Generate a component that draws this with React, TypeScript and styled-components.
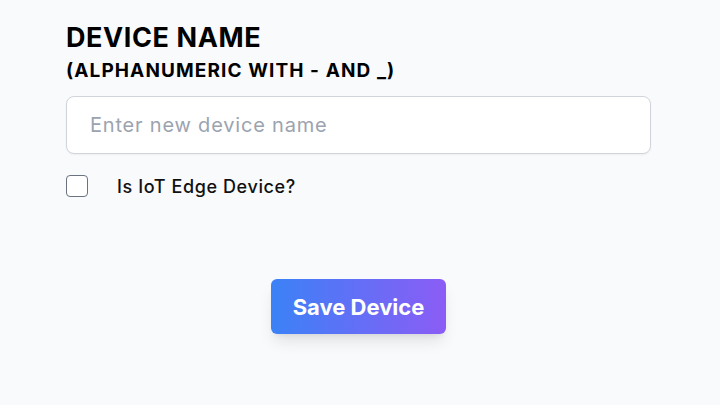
import React from 'react';
import styled, { createGlobalStyle } from 'styled-components';

export default function App() {
  return (
    <>
      <GlobalStyle />
      <Wrapper>
        <Form>
          <Title>DEVICE NAME</Title>
          <Hint>(ALPHANUMERIC WITH - AND _)</Hint>
          <NameInput placeholder="Enter new device name" />
          <CheckRow>
            <Check type="checkbox" />
            <CheckLabel>Is IoT Edge Device?</CheckLabel>
          </CheckRow>
          <Actions>
            <SaveButton>Save Device</SaveButton>
          </Actions>
        </Form>
      </Wrapper>
    </>
  );
}

const GlobalStyle = createGlobalStyle`
  html, body {
    margin: 0;
    background: #f8fafc;
    font-family: Inter, "Liberation Sans", sans-serif;
  }
`;

const Wrapper = styled.div`
  width: 720px;
  height: 405px;
  box-sizing: border-box;
  padding: 21px 0 0 66px;
`;

const Form = styled.div`
  width: 585px;
  display: flex;
  flex-direction: column;
`;

const Title = styled.h1`
  margin: 0;
  font-size: 27px;
  font-weight: 700;
  line-height: 34px;
  letter-spacing: 0.6px;
  color: #000;
`;

const Hint = styled.div`
  margin-top: 3px;
  font-size: 19px;
  font-weight: 700;
  line-height: 26px;
  letter-spacing: 1.1px;
  color: #000;
`;

const NameInput = styled.input`
  margin-top: 12px;
  height: 58px;
  box-sizing: border-box;
  padding: 0 23px;
  border: 1px solid #d1d5db;
  border-radius: 8px;
  background: #fff;
  font-family: inherit;
  font-size: 20px;
  letter-spacing: 0.8px;
  color: #111827;
  outline: none;
  box-shadow: 0 1px 2px rgba(0, 0, 0, 0.05);
  &::placeholder {
    color: #9ca3af;
  }
`;

const CheckRow = styled.label`
  margin-top: 21px;
  display: flex;
  align-items: center;
  gap: 29px;
`;

const Check = styled.input`
  appearance: none;
  margin: 0;
  width: 22px;
  height: 22px;
  border: 1.5px solid #6b7280;
  border-radius: 4px;
  background: #fff;
  box-sizing: border-box;
`;

const CheckLabel = styled.span`
  font-size: 18px;
  font-weight: 500;
  letter-spacing: 0.6px;
  color: #111;
`;

const Actions = styled.div`
  margin-top: 82px;
  display: flex;
  justify-content: center;
`;

const SaveButton = styled.button`
  width: 175px;
  height: 55px;
  border: none;
  border-radius: 6px;
  background: linear-gradient(90deg, #3b82f6, #8b5cf6);
  color: #fff;
  font-family: inherit;
  font-size: 22px;
  font-weight: 700;
  box-shadow: 0 10px 15px -3px rgba(0, 0, 0, 0.1), 0 4px 6px -4px rgba(0, 0, 0, 0.1);
  cursor: pointer;
`;
